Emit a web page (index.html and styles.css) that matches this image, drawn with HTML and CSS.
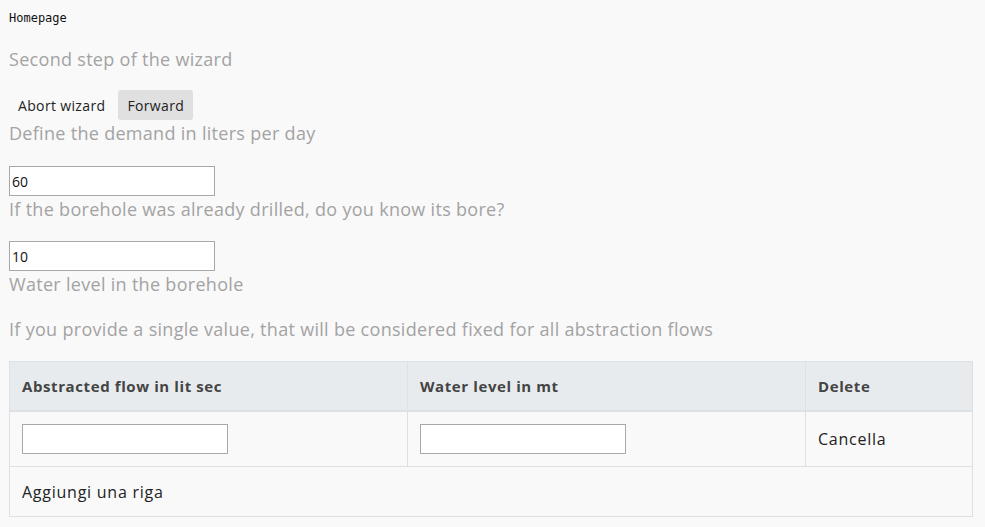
FILE: index.html
```html
<!DOCTYPE html>
<html>
<head>
<meta charset="utf-8">
<link rel="stylesheet" href="styles.css">
</head>
<body>
<div class="crumb">Homepage</div>
<h2 class="step">Second step of the wizard</h2>
<div class="actions">
  <button class="btn">Abort wizard</button>
  <button class="btn btn-active">Forward</button>
</div>
<label class="lbl">Define the demand in liters per day</label>
<input class="field" type="text" value="60">
<label class="lbl">If the borehole was already drilled, do you know its bore?</label>
<input class="field field-2" type="text" value="10">
<label class="lbl">Water level in the borehole</label>
<p class="lbl note">If you provide a single value, that will be considered fixed for all abstraction flows</p>
<table class="grid">
  <thead>
    <tr><th class="c1">Abstracted flow in lit sec</th><th class="c2">Water level in mt</th><th class="c3">Delete</th></tr>
  </thead>
  <tbody>
    <tr><td><input class="cell-in" type="text"></td><td><input class="cell-in" type="text"></td><td>Cancella</td></tr>
    <tr><td colspan="3" class="add">Aggiungi una riga</td></tr>
  </tbody>
</table>
</body>
</html>
```
FILE: styles.css
```css
html, body { margin: 0; padding: 0; }
body {
  background: #f9f9f9;
  padding: 8px 12px 0 9px;
  font-family: "Open Sans", sans-serif;
  color: #222;
}
.crumb {
  font-family: "DejaVu Sans Mono", monospace;
  font-size: 12px;
  line-height: 20px;
  color: #111;
}
.step {
  margin: 18px 0 0;
  font-size: 18px;
  font-weight: 400;
  line-height: 26px;
  letter-spacing: 0.3px;
  color: #a3a3a3;
}
.actions {
  display: flex;
  gap: 4px;
  margin-top: 18px;
}
.btn {
  font-family: "Open Sans", sans-serif;
  font-size: 14px;
  letter-spacing: 0.35px;
  color: #222;
  background: transparent;
  border: 0;
  border-radius: 3px;
  height: 30px;
  padding: 0 9px;
}
.btn-active { background: #e0e0e0; }
.lbl {
  display: block;
  font-size: 18px;
  line-height: 26px;
  letter-spacing: 0.3px;
  color: #a3a3a3;
  margin: 0;
}
.field {
  display: block;
  box-sizing: border-box;
  width: 206px;
  height: 30px;
  margin: 20px 0 0;
  border: 1px solid #a8a8a8;
  background: #fff;
  font-family: "Open Sans", sans-serif;
  font-size: 14px;
  padding: 0 2px;
  color: #111;
}
.field-2 { margin-top: 19px; }
.note { margin-top: 19px; }
.grid {
  margin-top: 19px;
  width: 964px;
  border-collapse: collapse;
  border: 1px solid #dde1e6;
  font-size: 16px;
  letter-spacing: 0.75px;
}
.grid th {
  background: #e8ebee;
  text-align: left;
  font-size: 15px;
  font-weight: 700;
  letter-spacing: 0.6px;
  color: #444;
  height: 48px;
  padding: 0 12px;
  border-right: 1px solid #dde1e6;
  border-bottom: 2px solid #dde1e6;
}
.grid td {
  height: 54px;
  padding: 0 12px;
  border-right: 1px solid #dde1e6;
  border-bottom: 1px solid #dde1e6;
  vertical-align: middle;
  color: #222;
}
.c1 { width: 373px; }
.c2 { width: 373px; }
.cell-in {
  box-sizing: border-box;
  width: 206px;
  height: 30px;
  border: 1px solid #a8a8a8;
  background: #fff;
  display: block;
}
.grid .add { height: 49px; }
```
